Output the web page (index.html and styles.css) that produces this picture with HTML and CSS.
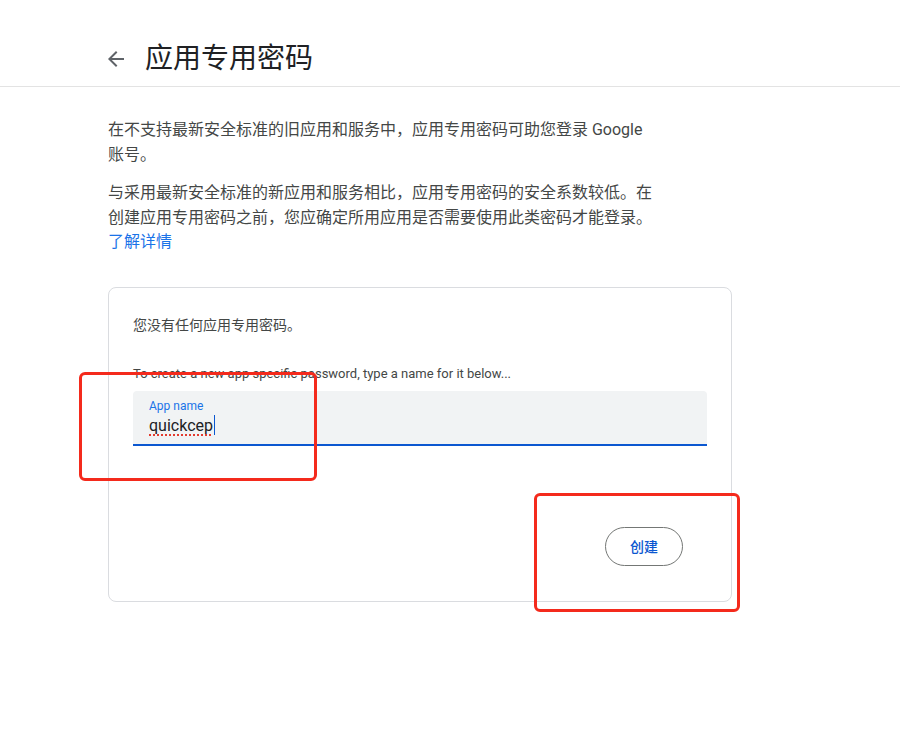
FILE: index.html
```html
<!DOCTYPE html>
<html lang="zh-CN">
<head>
<meta charset="utf-8">
<title>应用专用密码</title>
<link rel="stylesheet" href="styles.css">
</head>
<body>
<header class="topbar">
  <span class="back" aria-label="返回">
    <svg viewBox="0 0 24 24" width="24" height="24"><path d="M20 11H7.83l5.59-5.59L12 4l-8 8 8 8 1.41-1.41L7.83 13H20v-2z" fill="#5f6368"/></svg>
  </span>
  <h1 class="title">应用专用密码</h1>
</header>
<main class="content">
  <p class="intro">在不支持最新安全标准的旧应用和服务中，应用专用密码可助您登录 Google 账号。</p>
  <p class="intro second">与采用最新安全标准的新应用和服务相比，应用专用密码的安全系数较低。在创建应用专用密码之前，您应确定所用应用是否需要使用此类密码才能登录。<br><a class="link" href="#">了解详情</a></p>
  <section class="card">
    <p class="empty">您没有任何应用专用密码。</p>
    <p class="hint">To create a new app specific password, type a name for it below...</p>
    <div class="field">
      <span class="label">App name</span>
      <span class="value"><span class="typed">quickcep</span><span class="caret"></span></span>
    </div>
    <div class="actions">
      <button class="create">创建</button>
    </div>
  </section>
</main>
<div class="mark mark-a"></div>
<div class="mark mark-b"></div>
</body>
</html>
```
FILE: styles.css
```css
* { box-sizing: border-box; }
html, body { margin: 0; padding: 0; background: #fff; }
body {
  position: relative;
  width: 900px;
  height: 732px;
  font-family: Roboto, "Noto Sans CJK SC", Arial, sans-serif;
  color: #3c4043;
}
.topbar {
  height: 87px;
  display: flex;
  align-items: center;
  padding: 32px 0 0 104px;
  border-bottom: 1px solid #e3e3e3;
}
.back { width: 24px; height: 24px; display: flex; }
.title {
  margin: 0 0 0 17px;
  font-size: 28px;
  font-weight: 400;
  line-height: 36px;
  color: #202124;
}
.content { padding: 31px 0 0 108px; }
.intro {
  margin: 0;
  width: 548px;
  font-size: 16px;
  line-height: 24.5px;
  color: #444746;
}
.intro.second { margin-top: 14px; }
.link { color: #1a73e8; text-decoration: none; }
.card {
  margin-top: 32px;
  width: 624px;
  border: 1px solid #dadce0;
  border-radius: 8px;
  padding: 27px 24px 35px 24px;
}
.empty { margin: 0; font-size: 14px; line-height: 20px; color: #444746; }
.hint { margin: 30px 0 0; font-size: 13px; line-height: 18px; color: #444746; }
.field {
  margin-top: 8px;
  height: 55px;
  background: #f1f3f4;
  border-radius: 4px 4px 0 0;
  border-bottom: 2px solid #0b57d0;
  padding: 7px 16px 0;
  display: flex;
  flex-direction: column;
}
.label { font-size: 12px; line-height: 16px; color: #1a73e8; }
.value { display: flex; align-items: center; font-size: 16px; line-height: 23px; color: #202124; }
.typed {
  text-decoration: underline dotted #e33b2e;
  text-decoration-thickness: 2px;
  text-underline-offset: 4px;
}
.caret { width: 1px; height: 20px; background: #0b57d0; margin-left: 1px; }
.actions { display: flex; justify-content: flex-end; padding-right: 24px; margin-top: 81px; }
.create {
  height: 39px;
  padding: 0 24px;
  border: 1px solid #747775;
  border-radius: 20px;
  background: #fff;
  color: #0b57d0;
  font-family: Roboto, "Noto Sans CJK SC", sans-serif;
  font-size: 14px;
  font-weight: 500;
}
.mark {
  position: absolute;
  border: 3px solid #f42a1c;
  border-radius: 6px;
}
.mark-a { left: 79px; top: 372px; width: 238px; height: 109px; }
.mark-b { left: 534px; top: 493px; width: 206px; height: 119px; }
```
